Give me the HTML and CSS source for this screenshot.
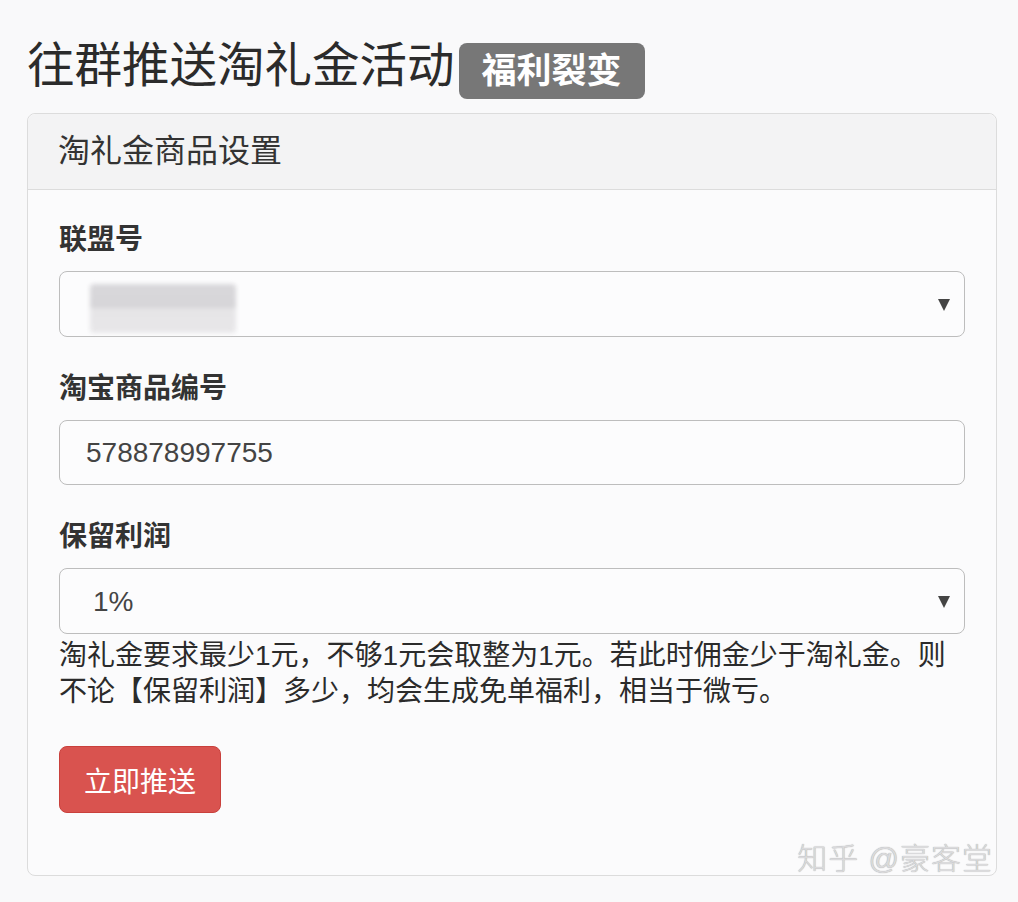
FILE: index.html
```html
<!DOCTYPE html>
<html lang="zh-CN">
<head>
    <meta charset="UTF-8">
    <meta name="viewport" content="width=device-width, initial-scale=1.0">
    <title>往群推送淘礼金活动</title>
    <link rel="stylesheet" href="styles.css">
</head>
<body>
    <div class="container">
        <h1><span class="title-text">往群推送淘礼金活动</span><span class="badge">福利裂变</span></h1>
        <div class="panel">
            <div class="panel-heading">淘礼金商品设置</div>
            <div class="panel-body">
                <div class="form-group">
                    <label for="pid">联盟号</label>
                    <div class="select-wrap">
                        <select id="pid">
                            <option></option>
                        </select>
                        <span class="redacted"></span>
                    </div>
                </div>
                <div class="form-group">
                    <label for="itemId">淘宝商品编号</label>
                    <input type="text" id="itemId" value="578878997755">
                </div>
                <div class="form-group">
                    <label for="profit">保留利润</label>
                    <div class="select-wrap">
                        <select id="profit" class="indent">
                            <option>1%</option>
                            <option>2%</option>
                            <option>5%</option>
                        </select>
                    </div>
                    <p class="help">淘礼金要求最少1元，不够1元会取整为1元。若此时佣金少于淘礼金。则不论【保留利润】多少，均会生成免单福利，相当于微亏。</p>
                </div>
                <button class="btn-danger">立即推送</button>
            </div>
            <div class="watermark">知乎 @豪客堂</div>
        </div>
    </div>
</body>
</html>
```

FILE: styles.css
```css
* {
    margin: 0;
    padding: 0;
    box-sizing: border-box;
    font-family: "Liberation Sans", "Noto Sans CJK SC", sans-serif;
}

body {
    background: #f9f9fa;
    color: #333;
}

.container {
    width: 970px;
    margin-left: 27px;
    padding-top: 43px;
}

h1 {
    display: flex;
    align-items: center;
    font-size: 47.5px;
    font-weight: 400;
    height: 56px;
    margin-bottom: 14px;
    color: #2b2b2b;
}

.title-text {
    line-height: 1;
    margin-bottom: 10px;
}

.badge {
    display: inline-block;
    margin-left: 4px;
    padding: 0 23px;
    height: 56px;
    line-height: 56px;
    background: #777;
    color: #fff;
    font-size: 35px;
    font-weight: 700;
    border-radius: 8px;
}

.panel {
    position: relative;
    background: #fbfbfc;
    border: 1px solid #dcdcdc;
    border-radius: 8px;
    height: 763px;
}

.panel-heading {
    height: 76px;
    line-height: 74px;
    padding: 0 30px;
    font-size: 32px;
    background: #f3f3f4;
    border-bottom: 1px solid #dcdcdc;
    border-radius: 8px 8px 0 0;
}

.panel-body {
    padding: 30px 31px;
}

.form-group {
    margin-bottom: 32px;
}

label {
    display: block;
    font-size: 28px;
    font-weight: 700;
    line-height: 40px;
    margin-bottom: 11px;
}

.select-wrap {
    position: relative;
}

.select-wrap::after {
    content: "";
    position: absolute;
    right: 15px;
    top: 28px;
    border-left: 6px solid transparent;
    border-right: 6px solid transparent;
    border-top: 12px solid #444;
    pointer-events: none;
}

select,
input {
    display: block;
    width: 100%;
    height: 66px;
    padding: 0 26px;
    font-size: 28px;
    color: #444;
    background: #fcfcfd;
    border: 1px solid #bdbdbd;
    border-radius: 8px;
    appearance: none;
    -webkit-appearance: none;
    outline: none;
}

select.indent {
    padding-left: 33px;
}

input {
    height: 65px;
}

.redacted {
    position: absolute;
    left: 31px;
    top: 13px;
    width: 146px;
    height: 49px;
    background: linear-gradient(#d9d8db 0, #d6d5d8 50%, #e6e5e7 50%, #e8e7e9 100%);
    filter: blur(2px);
    border-radius: 4px;
}

.help {
    margin-top: 4px;
    font-size: 28px;
    line-height: 36px;
    color: #2b2b2b;
}

.btn-danger {
    display: block;
    width: 162px;
    height: 67px;
    font-size: 28px;
    color: #fff;
    background: #d9534f;
    border: 1px solid #c9403c;
    border-radius: 8px;
    cursor: pointer;
    margin-top: -32px;
    position: relative;
    top: 36px;
}

.watermark {
    position: absolute;
    right: 3px;
    bottom: -3px;
    font-size: 30px;
    font-weight: 300;
    color: #dadadc;
    text-shadow: 0 0 1px #999;
    letter-spacing: 1px;
}
```
